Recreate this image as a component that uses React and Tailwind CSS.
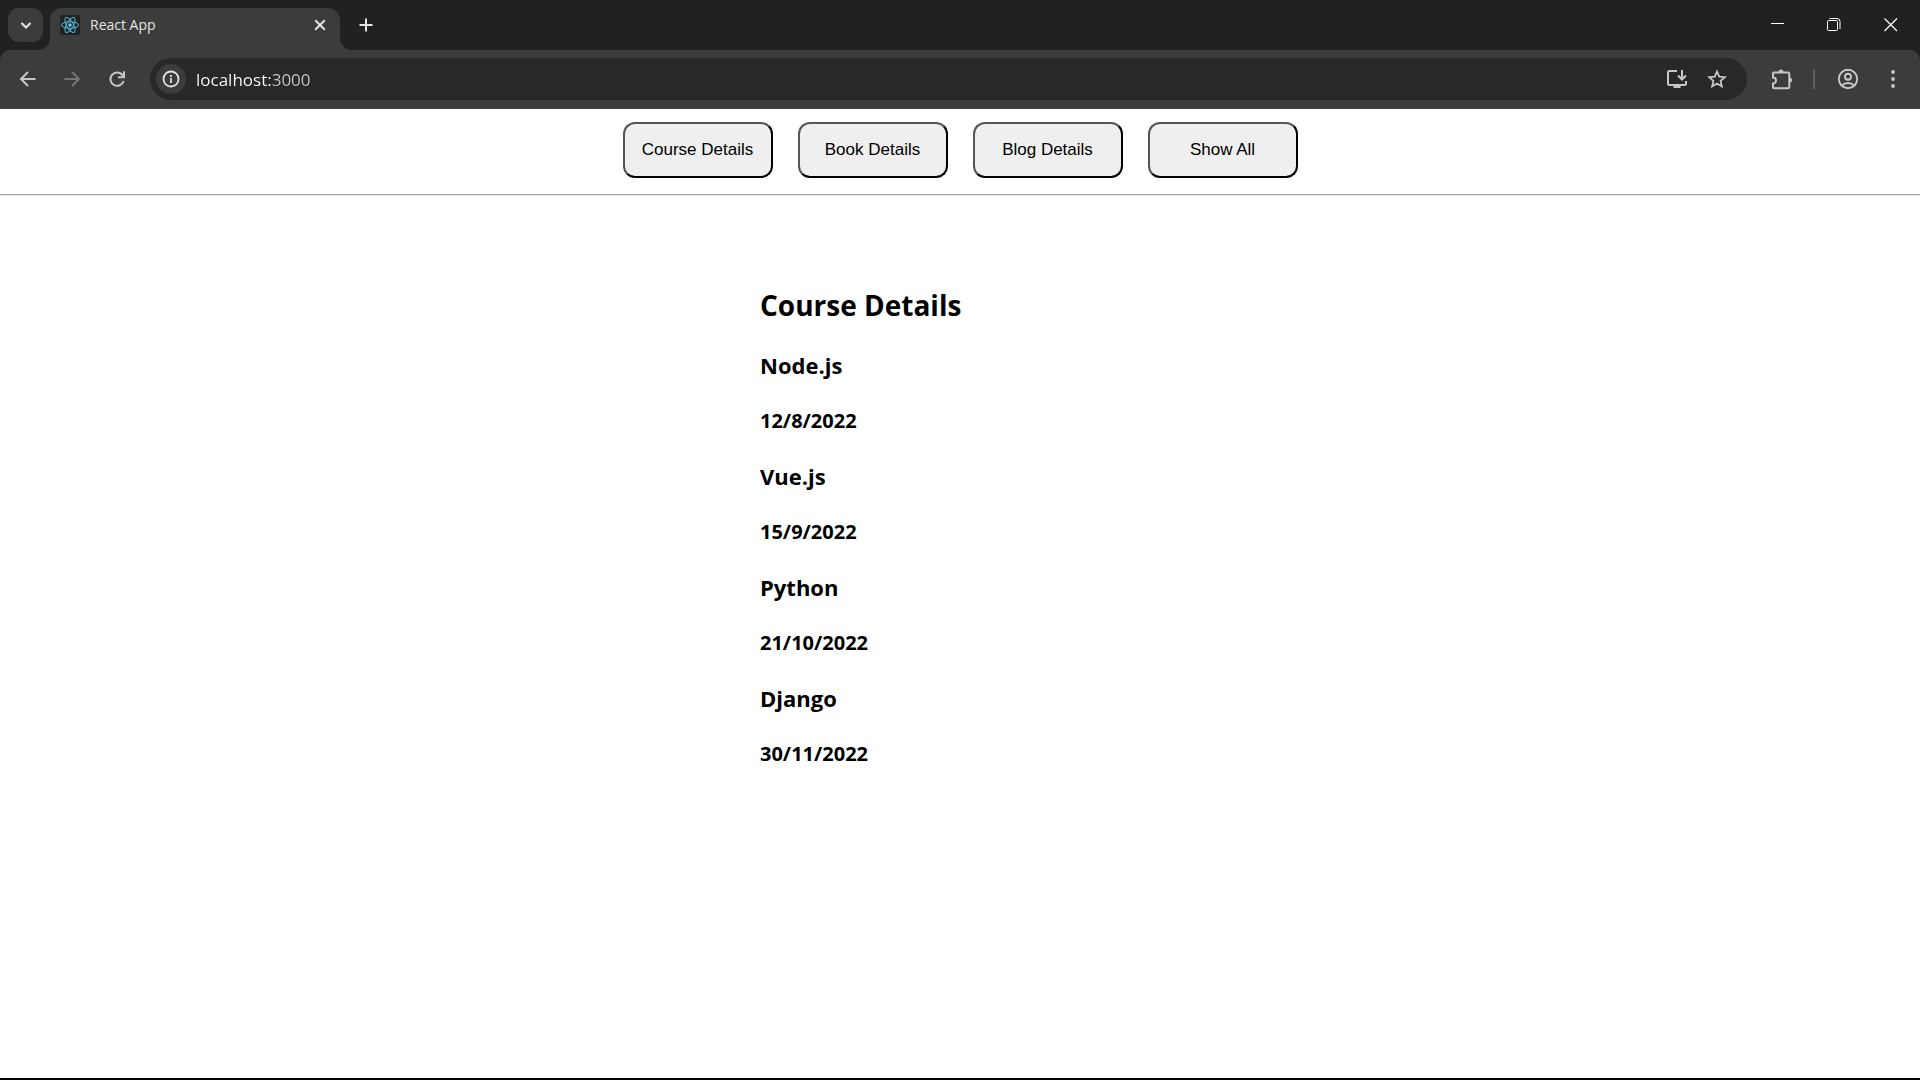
import React from "react";

const items = [
  { name: "Node.js", date: "12/8/2022" },
  { name: "Vue.js", date: "15/9/2022" },
  { name: "Python", date: "21/10/2022" },
  { name: "Django", date: "30/11/2022" },
];

const filters = ["Course Details", "Book Details", "Blog Details", "Show All"];

function Icon({ size = 20, width = 2, children }) {
  return (
    <svg
      width={size}
      height={size}
      viewBox={`0 0 ${size} ${size}`}
      fill="none"
      stroke="currentColor"
      strokeWidth={width}
      aria-hidden="true"
      className="shrink-0"
    >
      {children}
    </svg>
  );
}

function ReactLogo() {
  return (
    <svg width="20" height="20" viewBox="-10 -10 20 20" fill="none" stroke="#4fb8d4" aria-hidden="true" className="shrink-0 rounded-xs bg-[#222222]">
      <circle r="1.7" fill="#61dafb" stroke="none" />
      <ellipse rx="8.5" ry="3.3" />
      <ellipse rx="8.5" ry="3.3" transform="rotate(60)" />
      <ellipse rx="8.5" ry="3.3" transform="rotate(120)" />
    </svg>
  );
}

function TabStrip() {
  return (
    <header className="flex h-[50px] items-end bg-[#202221] text-[#e3e3e3]">
      <button aria-label="Search tabs" className="mb-2 ml-2 flex h-[34px] w-[35px] items-center justify-center rounded-[11px] bg-[#3c3c3c]">
        <Icon size={20} width={2.2}>
          <path d="M5.5 8l4.5 4.5L14.5 8" />
        </Icon>
      </button>
      <div className="relative ml-[7px] flex h-[42px] w-[290px] items-center rounded-t-xl bg-[#3c3c3c] pr-[10px] pb-2 pl-[10px] before:absolute before:bottom-0 before:-left-3 before:size-3 before:bg-[radial-gradient(circle_at_0_0,transparent_12px,#3c3c3c_12px)] after:absolute after:-right-3 after:bottom-0 after:size-3 after:bg-[radial-gradient(circle_at_100%_0,transparent_12px,#3c3c3c_12px)]">
        <ReactLogo />
        <span className="ml-[10px] flex-1 text-[14px] leading-5">React App</span>
        <button aria-label="Close tab" className="flex size-5 items-center justify-center">
          <Icon size={20} width={2}>
            <path d="M5.2 5.2l9.6 9.6M14.8 5.2l-9.6 9.6" />
          </Icon>
        </button>
      </div>
      <button aria-label="New tab" className="mb-[15px] ml-4 flex size-5 items-center justify-center">
        <Icon size={20} width={2}>
          <path d="M10 3.5v13M3.5 10h13" />
        </Icon>
      </button>
      <div className="ml-auto flex h-[50px] items-center text-white">
        <button aria-label="Minimize" className="flex h-[50px] w-[57px] items-center justify-center">
          <Icon size={20} width={1}>
            <path d="M3 8.5h13" />
          </Icon>
        </button>
        <button aria-label="Restore" className="flex h-[50px] w-14 items-center justify-center">
          <Icon size={20} width={1}>
            <rect x="3.5" y="5.5" width="10" height="10" rx="1" />
            <path d="M5.5 3.5H13q3 0 3 3V14" />
          </Icon>
        </button>
        <button aria-label="Close window" className="flex h-[50px] w-[58px] items-center justify-center">
          <Icon size={20} width={1.2}>
            <path d="M3.5 3.5L16 16M16 3.5L3.5 16" />
          </Icon>
        </button>
      </div>
    </header>
  );
}

function Toolbar() {
  return (
    <div className="bg-[#202221]">
      <nav aria-label="Browser" className="flex h-[59px] items-center rounded-t-[10px] border-b border-[#4a4a4a] bg-[#3c3c3c] text-[#c7c7c7]">
        <button aria-label="Back" className="ml-[18px]">
          <Icon size={20}>
            <path d="M17.5 10h-14M10 3l-7 7 7 7" />
          </Icon>
        </button>
        <button aria-label="Forward" disabled className="ml-6 text-[#757575]">
          <Icon size={20}>
            <path d="M2.5 10h14M10 3l7 7-7 7" />
          </Icon>
        </button>
        <button aria-label="Reload" className="ml-[25px]">
          <Icon size={20}>
            <path d="M16.6 12A6.7 6.7 0 1 1 15 5.500L16.800 7.500" />
            <path d="M17 2.3v6h-6" />
          </Icon>
        </button>
        <div className="ml-[23px] flex h-[42px] flex-1 items-center rounded-full bg-[#282828] pr-5 pl-[6px]">
          <button aria-label="View site information" className="flex size-[30px] items-center justify-center rounded-full bg-[#3c3c3c] text-[#e3e3e3]">
            <Icon size={20} width={1.8}>
              <circle cx="10" cy="10" r="7.5" />
              <path d="M10 9v5M10 6v2" />
            </Icon>
          </button>
          <input
            aria-label="Address"
            defaultValue="localhost:3000"
            className="ml-[10px] h-8 min-w-0 flex-1 bg-[linear-gradient(to_right,#ffffff_76px,#c7c7c7_76px)] bg-clip-text text-[17px] text-transparent caret-white outline-none"
          />
          <button aria-label="Install app" className="ml-4">
            <Icon size={22}>
              <path d="M11 3H3.500a1.500 1.500 0 0 0-1.500 1.500v11a1.500 1.500 0 0 0 1.500 1.500h15a1.500 1.500 0 0 0 1.500-1.500V13M16 2v9M12 7.500l4 4 4-4" />
              <path d="M7.500 17h7v3h-7z" fill="currentColor" stroke="none" />
            </Icon>
          </button>
          <button aria-label="Bookmark this page" className="ml-[19px]">
            <Icon size={20} width={1.8}>
              <path d="M10 2.500l2.200 5.200 5.600.5-4.200 3.700 1.200 5.500L10 14.500l-4.800 2.900 1.200-5.500-4.200-3.700 5.600-.5z" />
            </Icon>
          </button>
        </div>
        <button aria-label="Extensions" className="ml-6">
          <Icon size={22}>
            <path d="M3 4.500h14a1.300 1.300 0 0 1 1.300 1.300v13.200a1.300 1.300 0 0 1-1.300 1.300H3a1 1 0 0 1-1-1V15.500a3 3 0 0 0 0-6V5.500a1 1 0 0 1 1-1z" />
            <path d="M7.500 4a2.500 2.500 0 0 1 5 0zM18.500 9.500a2.500 2.500 0 0 1 0 5z" fill="currentColor" stroke="none" />
          </Icon>
        </button>
        <span className="ml-5 h-5 w-[2px] bg-[#5f5f5f]" />
        <button aria-label="Profile" className="ml-[22px]">
          <Icon size={22} width={1.9}>
            <circle cx="11" cy="11" r="9.2" />
            <circle cx="11" cy="8.7" r="3" />
            <path d="M4.800 17.500c3.500-3.300 8.900-3.300 12.400 0" />
          </Icon>
        </button>
        <button aria-label="Menu" className="mr-[17px] ml-6">
          <Icon size={20}>
            <g fill="currentColor" stroke="none">
              <circle cx="10" cy="3" r="1.9" />
              <circle cx="10" cy="10" r="1.9" />
              <circle cx="10" cy="17" r="1.9" />
            </g>
          </Icon>
        </button>
      </nav>
    </div>
  );
}

export default function App() {
  return (
    <div className="flex min-h-screen flex-col border-b-2 border-black bg-white font-['Open_Sans',sans-serif] text-black">
      <TabStrip />
      <Toolbar />
      <main>
        <div className="flex justify-center gap-[25px] pt-[13px] pb-4">
          {filters.map((label) => (
            <button
              key={label}
              className="h-14 w-[150px] rounded-xl border-2 border-t-[#555555] border-r-black border-b-black border-l-[#555555] bg-[#efefef] pb-px font-['Liberation_Sans',Arial,sans-serif] text-[17px]"
            >
              {label}
            </button>
          ))}
        </div>
        <hr className="border-t border-b border-t-[#9a9a9a] border-b-[#eeeeee]" />
        <section className="mx-auto flex w-[400px] flex-col gap-7 pt-[91px] font-bold">
          <h2 className="text-[28px] leading-9">Course Details</h2>
          {items.map((item) => (
            <React.Fragment key={item.name}>
              <h3 className="text-[22px] leading-7">{item.name}</h3>
              <h4 className="text-[20px] leading-[27px]">{item.date}</h4>
            </React.Fragment>
          ))}
        </section>
      </main>
    </div>
  );
}
